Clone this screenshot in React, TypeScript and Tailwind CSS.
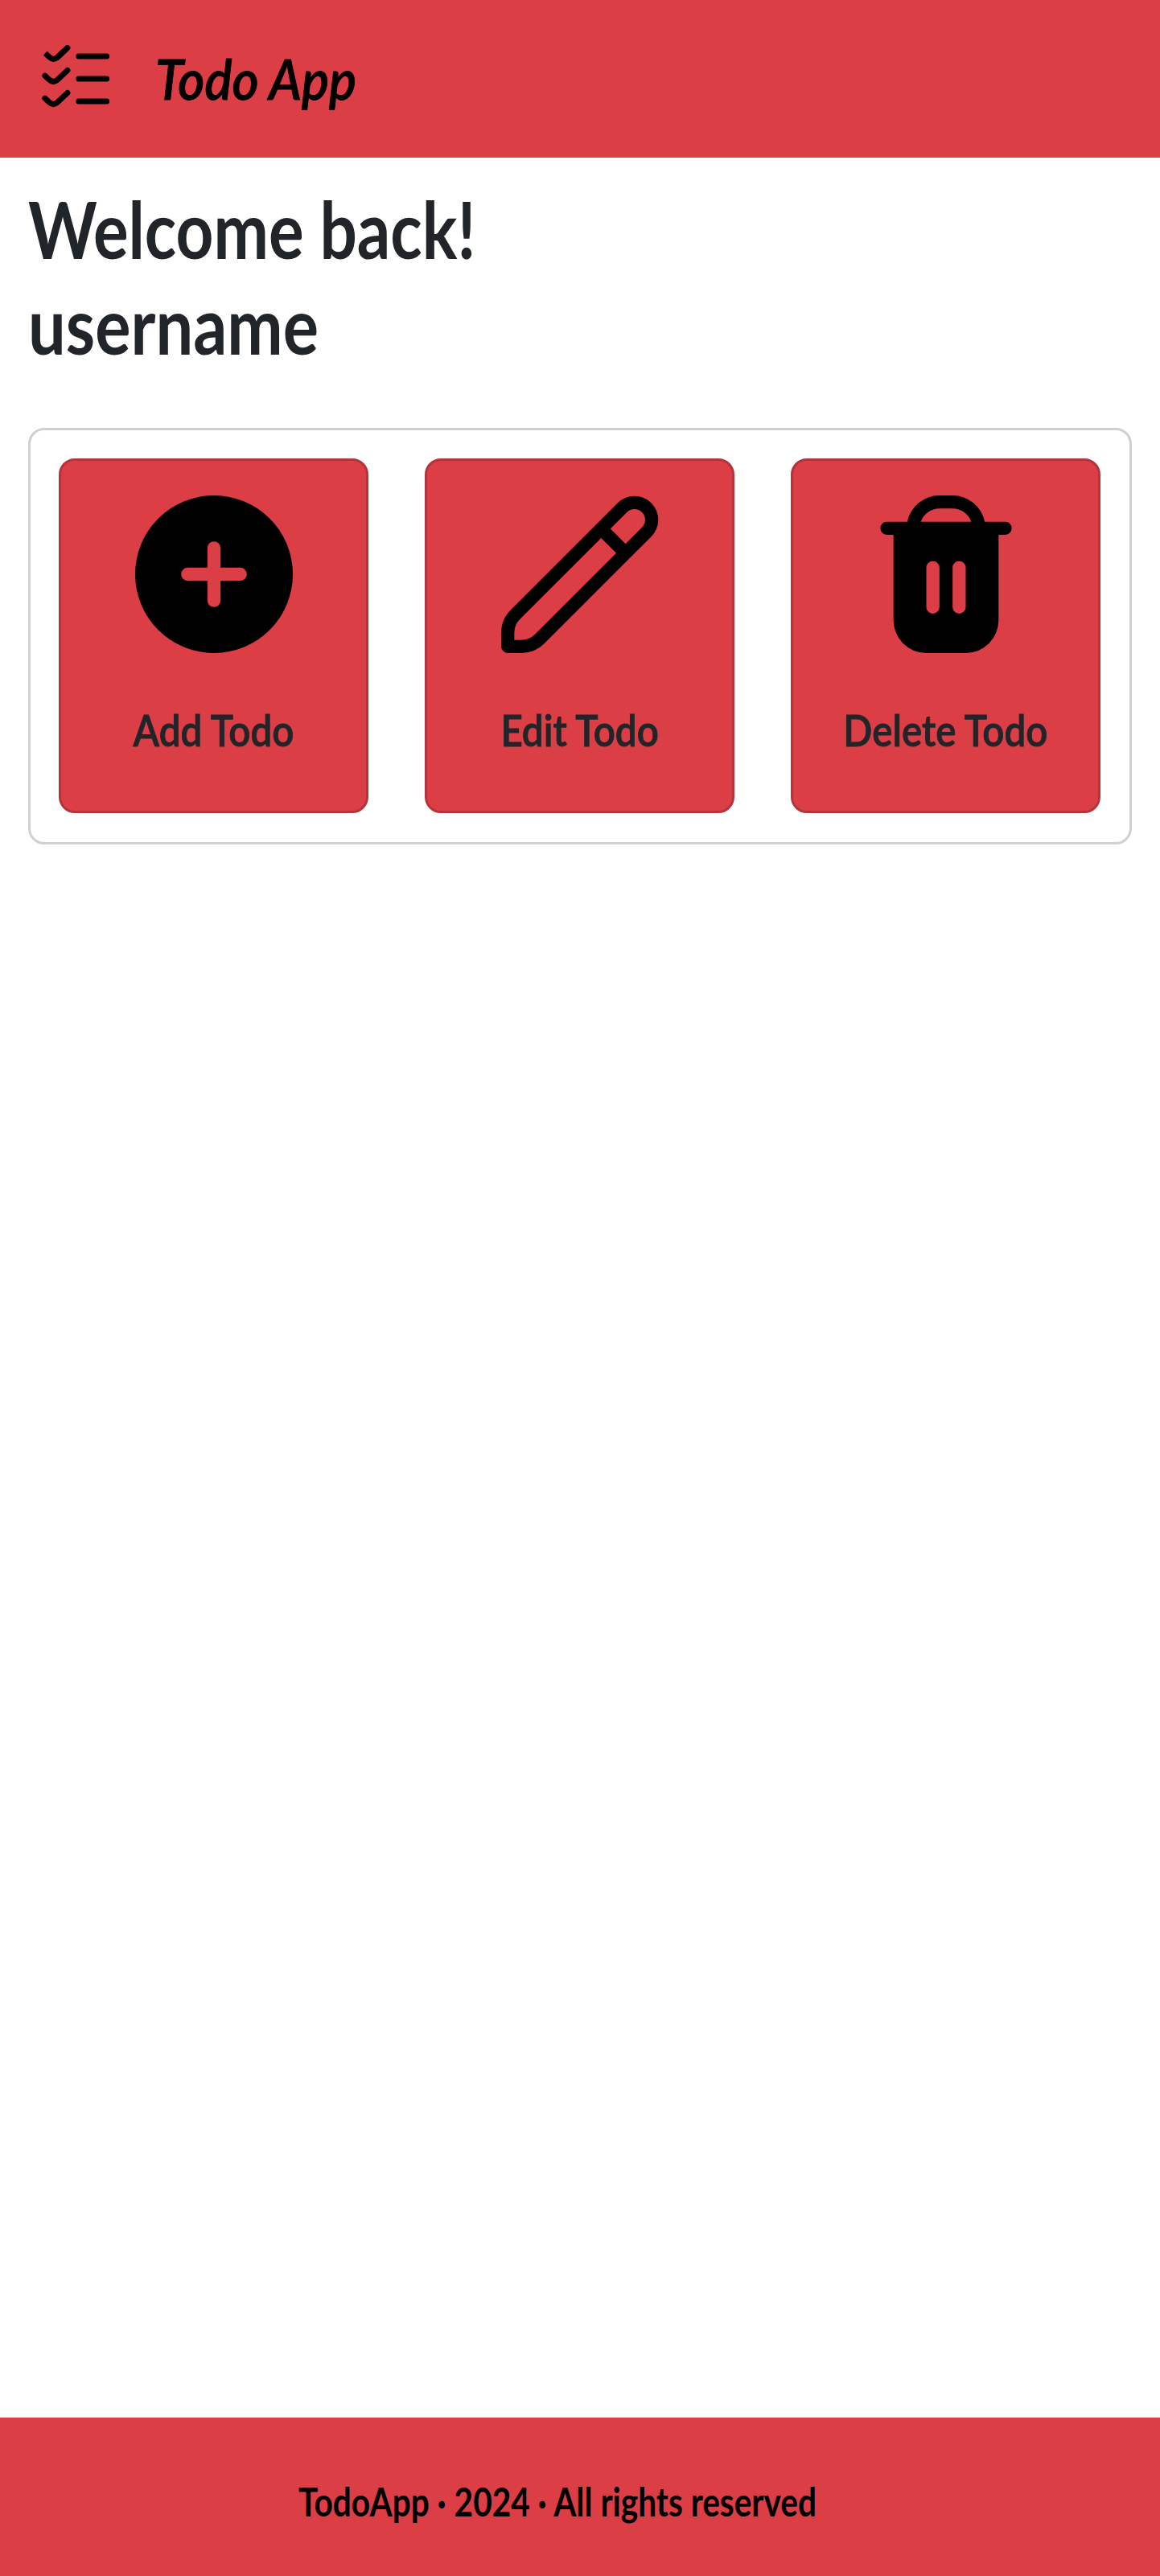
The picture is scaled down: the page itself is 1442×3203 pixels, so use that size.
import React from "react";

function ListCheckIcon() {
  return (
    <svg viewBox="0 0 24 24" className="size-[84px] shrink-0" fill="none" stroke="#000" strokeWidth="2" strokeLinecap="round">
      <path d="M13.1 4H23.1M13.1 12H23.1M13.1 20H23.1" />
      <path d="M1.2 2.9 2.7 4.3Q4.1 5.6 5.5 4.4L9.1 1" strokeLinecap="butt" />
      <path d="M5.5 4.4 9.1 1M1.1 10.9 2.7 12.4Q4.1 13.6 5.5 12.4L9.1 9M1.1 18.9 2.7 20.4Q4.1 21.6 5.5 20.4L9.1 17" />
    </svg>
  );
}

const icons = {
  add: "M12 0a12 12 0 1 0 12 12A12 12 0 0 0 12 0Zm4 13H13v3a1 1 0 0 1-2 0V13H8a1 1 0 0 1 0-2h3V8a1 1 0 0 1 2 0v3h3a1 1 0 0 1 0 2Z",
  edit: "M22.853,1.148a3.626,3.626,0,0,0-5.124,0L1.465,17.412A4.968,4.968,0,0,0,0,20.947V23a1,1,0,0,0,1,1H3.053a4.966,4.966,0,0,0,3.535-1.464L22.853,6.271A3.626,3.626,0,0,0,22.853,1.148ZM5.174,21.122A3.022,3.022,0,0,1,3.053,22H2V20.947a2.98,2.98,0,0,1,.879-2.121L15.222,6.483l2.3,2.3ZM21.438,4.857,18.932,7.364l-2.3-2.295,2.507-2.507a1.623,1.623,0,1,1,2.295,2.3Z",
  trash:
    "M21,4H17.9A5.009,5.009,0,0,0,13,0H11A5.009,5.009,0,0,0,6.1,4H3A1,1,0,0,0,3,6H4V19a5.006,5.006,0,0,0,5,5h6a5.006,5.006,0,0,0,5-5V6h1a1,1,0,0,0,0-2ZM11,17a1,1,0,0,1-2,0V11a1,1,0,0,1,2,0Zm4,0a1,1,0,0,1-2,0V11a1,1,0,0,1,2,0ZM8.171,4A3.006,3.006,0,0,1,11,2h2a3.006,3.006,0,0,1,2.829,2Z",
};

const actions = [
  { label: "Add Todo", icon: icons.add },
  { label: "Edit Todo", icon: icons.edit },
  { label: "Delete Todo", icon: icons.trash },
];

export default function App() {
  return (
    <div className="flex h-[3203px] w-[1442px] flex-col overflow-hidden bg-white font-['Lato',sans-serif] font-bold text-[#212529]">
      <header className="flex h-[196px] shrink-0 items-center gap-[57px] bg-[#dc3e46] pl-[52px] text-black">
        <ListCheckIcon />
        <span className="origin-left scale-x-[0.922] pb-[2px] text-[69px] leading-none font-semibold whitespace-nowrap italic [-webkit-text-stroke:0.8px_#000]">
          Todo App
        </span>
      </header>

      <main className="flex grow flex-col px-[35px] pt-[29px]">
        <h1 className="flex w-[560px] flex-col text-[98px] leading-[118.5px]">
          <span className="w-max origin-left scale-x-[0.834] whitespace-nowrap">Welcome back!</span>
          <span className="w-max origin-left scale-x-[0.846]">username</span>
        </h1>
        <section className="mt-[70px] flex h-[518px] gap-[70px] rounded-[20px] border-[3px] border-[#d0d0d0] p-[35px]">
          {actions.map((a) => (
            <button
              key={a.label}
              className="flex h-[441px] w-[385px] shrink-0 flex-col items-center rounded-[20px] border-[3px] border-[#b5333a] bg-[#dc3e46] pt-[43px]"
            >
              <svg viewBox="0 0 24 24" className="size-[196px]" fill="#000" fillRule="evenodd">
                <path d={a.icon} />
              </svg>
              <span className="mt-[63px] scale-x-[0.88] text-[54px] leading-[65px] font-semibold whitespace-nowrap [-webkit-text-stroke:0.9px_#212529]">
                {a.label}
              </span>
            </button>
          ))}
        </section>
      </main>

      <footer className="flex h-[197px] shrink-0 items-center bg-[#dc3e46] pt-[12px] pl-[371px] text-black">
        <span className="origin-left scale-x-[0.828] text-[49px] leading-none whitespace-nowrap">
          TodoApp · 2024 · All rights reserved
        </span>
      </footer>
    </div>
  );
}
